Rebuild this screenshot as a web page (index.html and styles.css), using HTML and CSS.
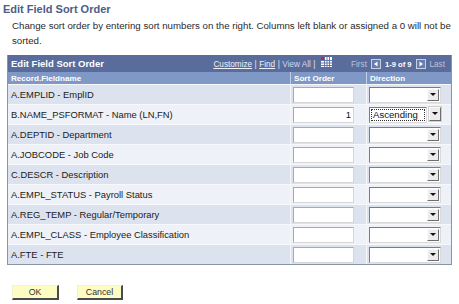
FILE: index.html
```html
<!DOCTYPE html>
<html>
<head>
<meta charset="utf-8">
<link rel="stylesheet" href="styles.css">
</head>
<body>
<div class="page">
  <h1 class="title">Edit Field Sort Order</h1>
  <p class="desc">Change sort order by entering sort numbers on the right. Columns left blank or assigned a 0 will not be<br>sorted.</p>

  <div class="grid">
    <div class="bar">
      <span class="bar-title">Edit Field Sort Order</span>
      <div class="nav">
        <span class="lnk">Customize</span><span class="sep">|</span><span class="lnk">Find</span><span class="sep">|</span><span class="dim">View All</span><span class="sep">|</span>
        <svg class="xls" width="11" height="10" viewBox="0 0 11 10">
          <rect x="0" y="0" width="11" height="10" fill="#ffffff"/>
          <rect x="0" y="0" width="4" height="3" fill="#d8232a"/>
          <path d="M0 3.5H11M0 6H11M0 8.5H11M3.5 0V10M6 0V10M8.5 0V10" stroke="#5b70a6" stroke-width="0.9"/>
        </svg>
        <span class="off first">First</span>
        <span class="arr"><svg width="6" height="6" viewBox="0 0 6 6"><path d="M4.5 0.5V5.5L1 3Z" fill="#ffffff"/></svg></span>
        <span class="count">1-9 of 9</span>
        <span class="arr"><svg width="6" height="6" viewBox="0 0 6 6"><path d="M1.5 0.5V5.5L5 3Z" fill="#ffffff"/></svg></span>
        <span class="off">Last</span>
      </div>
    </div>
    <div class="row head">
      <div class="c1">Record.Fieldname</div>
      <div class="c2">Sort Order</div>
      <div class="c3">Direction</div>
    </div>
    <div class="row odd">
      <div class="c1">A.EMPLID - EmplID</div>
      <div class="c2"><div class="inp"></div></div>
      <div class="c3"><div class="sel"><div class="sel-val"></div><div class="sel-btn"><span class="tri"></span></div></div></div>
    </div>
    <div class="row even">
      <div class="c1">B.NAME_PSFORMAT - Name (LN,FN)</div>
      <div class="c2"><div class="inp">1</div></div>
      <div class="c3"><div class="sel open"><div class="sel-val"><span class="focus">Ascending</span></div><div class="sel-btn"><span class="tri"></span></div></div></div>
    </div>
    <div class="row odd">
      <div class="c1">A.DEPTID - Department</div>
      <div class="c2"><div class="inp"></div></div>
      <div class="c3"><div class="sel"><div class="sel-val"></div><div class="sel-btn"><span class="tri"></span></div></div></div>
    </div>
    <div class="row even">
      <div class="c1">A.JOBCODE - Job Code</div>
      <div class="c2"><div class="inp"></div></div>
      <div class="c3"><div class="sel"><div class="sel-val"></div><div class="sel-btn"><span class="tri"></span></div></div></div>
    </div>
    <div class="row odd">
      <div class="c1">C.DESCR - Description</div>
      <div class="c2"><div class="inp"></div></div>
      <div class="c3"><div class="sel"><div class="sel-val"></div><div class="sel-btn"><span class="tri"></span></div></div></div>
    </div>
    <div class="row even">
      <div class="c1">A.EMPL_STATUS - Payroll Status</div>
      <div class="c2"><div class="inp"></div></div>
      <div class="c3"><div class="sel"><div class="sel-val"></div><div class="sel-btn"><span class="tri"></span></div></div></div>
    </div>
    <div class="row odd">
      <div class="c1">A.REG_TEMP - Regular/Temporary</div>
      <div class="c2"><div class="inp"></div></div>
      <div class="c3"><div class="sel"><div class="sel-val"></div><div class="sel-btn"><span class="tri"></span></div></div></div>
    </div>
    <div class="row even">
      <div class="c1">A.EMPL_CLASS - Employee Classification</div>
      <div class="c2"><div class="inp"></div></div>
      <div class="c3"><div class="sel"><div class="sel-val"></div><div class="sel-btn"><span class="tri"></span></div></div></div>
    </div>
    <div class="row odd last">
      <div class="c1">A.FTE - FTE</div>
      <div class="c2"><div class="inp"></div></div>
      <div class="c3"><div class="sel"><div class="sel-val"></div><div class="sel-btn"><span class="tri"></span></div></div></div>
    </div>
  </div>

  <div class="actions">
    <div class="btn ok">OK</div>
    <div class="btn cancel">Cancel</div>
  </div>
</div>
</body>
</html>
```
FILE: styles.css
```css
html, body {
  margin: 0;
  padding: 0;
  background: #ffffff;
}
body {
  font-family: "Liberation Sans", Arial, sans-serif;
  color: #222222;
}
.page {
  width: 459px;
  height: 304px;
  overflow: hidden;
}
.title {
  margin: 3px 0 0 3px;
  font-size: 11px;
  line-height: 13px;
  font-weight: bold;
  color: #4b5e86;
}
.desc {
  margin: 3px 0 0 12px;
  font-size: 9.7px;
  line-height: 14.5px;
  color: #2a2a2a;
  white-space: nowrap;
}
.grid {
  margin: 7px 0 0 7px;
  width: 443px;
  border: 1px solid #8b93a6;
  border-top: none;
}
.bar {
  height: 17px;
  background: #596c9c;
  display: flex;
  align-items: center;
  justify-content: space-between;
  color: #ffffff;
}
.bar-title {
  padding-left: 3px;
  font-size: 9.5px;
  font-weight: bold;
}
.nav {
  display: flex;
  align-items: center;
  font-size: 8.2px;
  padding-right: 6px;
  padding-top: 1px;
}
.lnk {
  color: #eef1f8;
  text-decoration: underline;
}
.sep {
  color: #e4e8f2;
  margin: 0 2.5px;
}
.dim {
  color: #d2d9ea;
}
.xls {
  margin-left: 3px;
  margin-top: -4px;
}
.off {
  color: #b9c3dc;
}
.first {
  margin-left: 19px;
}
.arr {
  width: 8px;
  height: 8px;
  border: 1px solid #c8d0e4;
  display: flex;
  align-items: center;
  justify-content: center;
  margin: 0 4px;
  background: #6a7db0;
}
.count {
  font-weight: bold;
  color: #ffffff;
  font-size: 7.6px;
}
.row {
  display: grid;
  grid-template-columns: 282px 76px 85px;
  height: 20px;
  border-top: 1px solid #f6f8fb;
  box-sizing: border-box;
}
.row.head {
  height: 12px;
  border-top: none;
  background: #7f98c6;
  color: #ffffff;
  font-weight: bold;
  font-size: 8.1px;
}
.row > div {
  display: flex;
  align-items: center;
}
.row > .c2, .row > .c3 {
  border-left: 1px solid #f4f6fa;
  padding-left: 2px;
}
.row.head > .c2, .row.head > .c3 {
  border-left: 1px solid #c2cfe6;
  padding-left: 3px;
}
.row.head > .c1 {
  padding-left: 3px;
  font-size: 8.1px;
  color: #ffffff;
}
.odd { background: #dde3ee; }
.even { background: #eef1f7; }
.c1 {
  padding-left: 3px;
  font-size: 9.4px;
  color: #1a1a1a;
}
.inp {
  width: 57px;
  height: 14px;
  background: #ffffff;
  border: 1px solid;
  border-color: #a9a9a9 #d6d6d6 #d6d6d6 #a9a9a9;
  font-size: 9.4px;
  line-height: 14px;
  text-align: right;
  padding-right: 2px;
  box-sizing: content-box;
  color: #111;
}
.sel {
  width: 70px;
  height: 14px;
  display: flex;
  background: #ffffff;
  border: 1px solid;
  border-color: #7c7c7c #dadada #dadada #7c7c7c;
}
.sel-val {
  flex: 1;
  display: flex;
  align-items: center;
  font-size: 9.6px;
}
.focus {
  flex: 1;
  outline: 1px dotted #333;
  outline-offset: -1px;
  padding: 0 2px;
  line-height: 12px;
  margin: 0 1px;
  color: #111;
}
.sel-btn {
  width: 10px;
  height: 10px;
  margin: 1px 1px 1px 0;
  background: #ececec;
  border: 1px solid;
  border-color: #fafafa #6e6e6e #6e6e6e #fafafa;
  display: flex;
  align-items: center;
  justify-content: center;
}
.tri {
  width: 0;
  height: 0;
  border-left: 3px solid transparent;
  border-right: 3px solid transparent;
  border-top: 3px solid #111;
}
.sel.open {
  border: none;
  width: 72px;
  height: 16px;
  gap: 2px;
}
.sel.open .sel-val {
  border: 1px solid;
  border-color: #7c7c7c #dadada #dadada #7c7c7c;
}
.sel.open .sel-btn {
  width: 10px;
  height: 12px;
  margin: 0;
  border-color: #fafafa #6e6e6e #6e6e6e #fafafa;
  outline: 1px solid #cfcfcf;
}
.actions {
  display: flex;
  gap: 18px;
  margin: 20px 0 0 12px;
}
.btn {
  height: 12px;
  background: #fdfcc2;
  border: 1px solid;
  border-color: #f3f2d6 #4a4a4a #4a4a4a #f3f2d6;
  border-width: 1px 2px 2px 1px;
  font-size: 8.8px;
  line-height: 12px;
  text-align: center;
  color: #333333;
}
.ok { width: 44px; }
.cancel { width: 43px; }
```
